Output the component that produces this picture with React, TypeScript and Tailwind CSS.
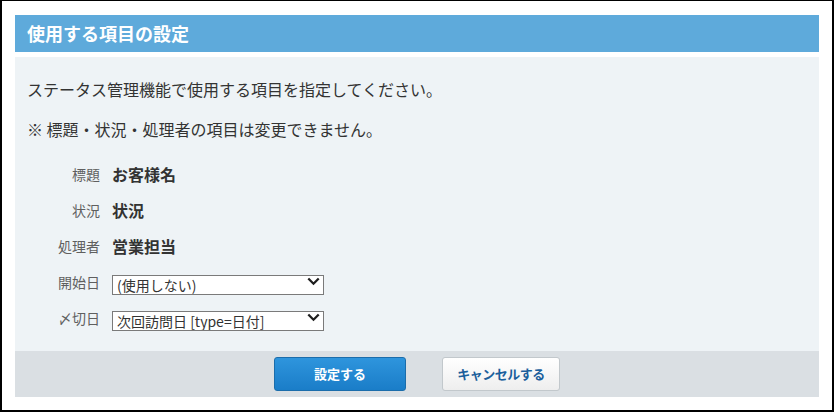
import React from "react";

const font = { fontFamily: '"Noto Sans CJK JP", "Noto Sans", sans-serif' };

function Chevron() {
  return (
    <svg width="13" height="9" viewBox="0 0 13 9" className="pointer-events-none absolute right-[4px] top-[5px]">
      <path d="M1.3 1.5 L6.5 6.7 L11.7 1.5" fill="none" stroke="#1e1e1e" strokeWidth="2.3" />
    </svg>
  );
}

function Select({ value }: { value: string }) {
  return (
    <div className="relative w-[212px] h-[20px]">
      <select
        defaultValue={value}
        className="w-full h-full appearance-none bg-white border border-[#7a7a7a] pl-[4px] pr-[20px] text-[14px] leading-[18px] text-[#333] outline-none"
        style={font}
      >
        <option>{value}</option>
      </select>
      <Chevron />
    </div>
  );
}

export default function App() {
  const rows: { label: string; value?: string; select?: string }[] = [
    { label: "標題", value: "お客様名" },
    { label: "状況", value: "状況" },
    { label: "処理者", value: "営業担当" },
    { label: "開始日", select: "(使用しない)" },
    { label: "〆切日", select: "次回訪問日 [type=日付]" },
  ];
  return (
    <div
      className="w-[834px] h-[412px] bg-white border-black border-t border-l-2 border-r-2 border-b-2 px-[13px] pt-[14px]"
      style={font}
    >
      <div className="h-[37px] bg-[#5eaadb] flex items-center pl-[12px] text-white font-bold text-[18px]">
        使用する項目の設定
      </div>
      <div className="mt-[5px] h-[294px] bg-[#eef3f6] pt-[20px] text-[#333]">
        <div className="pl-[12px] h-[24px] leading-[24px] text-[16px] mb-[16px]">
          ステータス管理機能で使用する項目を指定してください。
        </div>
        <div className="pl-[12px] h-[24px] leading-[24px] text-[16px] mb-[15px]">
          ※ 標題・状況・処理者の項目は変更できません。
        </div>
        <div className="grid grid-cols-[85px_auto] gap-x-[12px]">
          {rows.map((r) => (
            <React.Fragment key={r.label}>
              <div className="h-[36px] flex items-center justify-end text-[14px] text-[#5f5f5f]">{r.label}</div>
              <div className="h-[36px] flex items-center">
                {r.value ? (
                  <span className="text-[16px] font-bold text-[#333]">{r.value}</span>
                ) : (
                  <Select value={r.select!} />
                )}
              </div>
            </React.Fragment>
          ))}
        </div>
      </div>
      <div className="h-[46px] bg-[#dadfe3] flex items-center justify-center gap-[36px]">
        <button className="w-[132px] h-[34px] rounded-[3px] border border-[#1b6dab] bg-gradient-to-b from-[#2e95dd] to-[#1a7dc8] text-white font-bold text-[13px]">
          設定する
        </button>
        <button className="w-[118px] h-[34px] rounded-[3px] border border-[#c2c8cc] bg-gradient-to-b from-white to-[#eeeeee] text-[#1b5f9c] font-bold text-[13px] tracking-[-0.5px]">
          キャンセルする
        </button>
      </div>
    </div>
  );
}
